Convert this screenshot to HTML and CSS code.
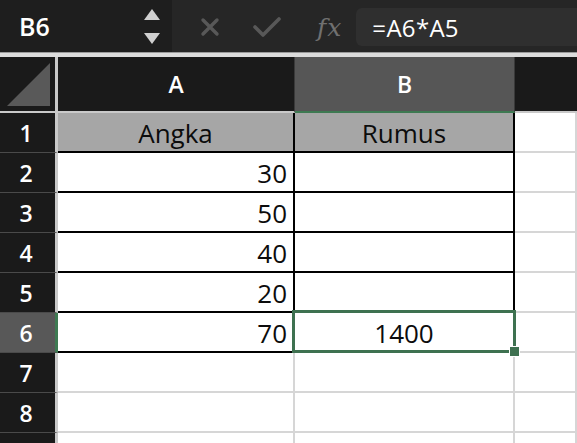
FILE: index.html
```html
<!DOCTYPE html>
<html lang="id">
<head>
<meta charset="utf-8">
<title>Excel</title>
<link rel="stylesheet" href="styles.css">
</head>
<body>
<div class="app">
  <div class="toolbar">
    <div class="namebox">
      <span class="name">B6</span>
      <span class="spin">
        <svg width="16" height="36" viewBox="0 0 16 36"><polygon points="8,0 16,11 0,11" fill="#d0d0d0"/><polygon points="0,24 16,24 8,35" fill="#d0d0d0"/></svg>
      </span>
    </div>
    <div class="bar">
      <svg class="ico-x" width="20" height="20" viewBox="0 0 20 20"><path d="M3 3 L17 17 M17 3 L3 17" stroke="#585858" stroke-width="3.4" stroke-linecap="round"/></svg>
      <svg class="ico-check" width="28" height="22" viewBox="0 0 28 22"><path d="M2 11 L10 19 L26 3" stroke="#585858" stroke-width="3.6" fill="none" stroke-linecap="round" stroke-linejoin="round"/></svg>
      <span class="fx">fx</span>
      <div class="formula">=A6*A5</div>
    </div>
  </div>
  <div class="sep"></div>
  <div class="sheet">
    <div class="corner"><svg width="44" height="44" viewBox="0 0 44 44"><polygon points="0,43 43,43 43,0" fill="#595959"/></svg></div>
    <div class="colh">A</div>
    <div class="colh sel-col">B</div>
    <div class="colh last"></div>

    <div class="rowh">1</div>
    <div class="cell bk hd c">Angka</div>
    <div class="cell bk hd c">Rumus</div>
    <div class="cell"></div>

    <div class="rowh">2</div>
    <div class="cell bk r">30</div>
    <div class="cell bk"></div>
    <div class="cell"></div>

    <div class="rowh">3</div>
    <div class="cell bk r">50</div>
    <div class="cell bk"></div>
    <div class="cell"></div>

    <div class="rowh">4</div>
    <div class="cell bk r">40</div>
    <div class="cell bk"></div>
    <div class="cell"></div>

    <div class="rowh">5</div>
    <div class="cell bk r">20</div>
    <div class="cell bk"></div>
    <div class="cell"></div>

    <div class="rowh sel-row">6</div>
    <div class="cell bk r">70</div>
    <div class="cell bk c active">1400<div class="selbox"><div class="handle"></div></div></div>
    <div class="cell"></div>

    <div class="rowh">7</div>
    <div class="cell"></div>
    <div class="cell"></div>
    <div class="cell"></div>

    <div class="rowh">8</div>
    <div class="cell"></div>
    <div class="cell"></div>
    <div class="cell"></div>

    <div class="rowh"></div>
    <div class="cell"></div>
    <div class="cell"></div>
    <div class="cell"></div>
  </div>
</div>
</body>
</html>
```

FILE: styles.css
```css
* { box-sizing: border-box; }
html, body { margin: 0; padding: 0; }
body {
  width: 577px;
  height: 443px;
  overflow: hidden;
  background: #ffffff;
  font-family: "Open Sans", "Noto Sans", sans-serif;
}
.app { width: 577px; }

.toolbar {
  display: flex;
  height: 52px;
  background: #262626;
}
.namebox {
  width: 172px;
  background: #1e1e1e;
  display: flex;
  align-items: center;
  padding-left: 19px;
  padding-right: 12px;
}
.name {
  color: #ffffff;
  font-size: 25px;
  font-weight: 600;
  flex: 1;
}
.spin { display: flex; padding-top: 2px; }
.bar {
  flex: 1;
  display: flex;
  align-items: center;
  padding-top: 8px;
  padding-bottom: 6px;
  height: 52px;
}
.ico-x { margin-left: 28px; }
.ico-check { margin-left: 33px; }
.fx {
  margin-left: 36px;
  font-family: "DejaVu Serif", "Liberation Serif", serif;
  font-style: italic;
  font-size: 25px;
  color: #707070;
  letter-spacing: 1px;
}
.formula {
  margin-left: 14px;
  flex: 1;
  align-self: stretch;
  background: #2f2f2f;
  border-radius: 6px 0 0 6px;
  color: #ffffff;
  font-size: 24px;
  font-weight: 500;
  letter-spacing: 0.3px;
  display: flex;
  align-items: center;
  padding-left: 16px;
}

.sep {
  height: 5px;
  background: #dcdcdc;
  border-top: 1px solid #9a9a9a;
}

.sheet {
  display: grid;
  grid-template-columns: 58px 237px 220px 62px;
  grid-template-rows: 56px repeat(9, 40px);
  background: #ffffff;
}
.corner {
  background: #1a1a1a;
  border-right: 3px solid #c9c9c9;
  border-bottom: 2px solid #c9c9c9;
  display: flex;
  align-items: flex-end;
  justify-content: flex-end;
  padding: 0 4px 4px 0;
}
.colh {
  background: #1a1a1a;
  color: #ffffff;
  font-size: 23px;
  font-weight: 600;
  display: flex;
  align-items: center;
  justify-content: center;
  border-right: 1px solid #3a3a3a;
  border-bottom: 2px solid #c9c9c9;
}
.colh.sel-col {
  background: #565656;
  border-bottom: 2px solid #3e7a52;
}
.colh.last { border-right: none; }

.rowh {
  background: #1a1a1a;
  color: #ffffff;
  font-size: 23px;
  font-weight: 600;
  display: flex;
  align-items: center;
  justify-content: center;
  padding-right: 3px;
  border-right: 3px solid #c9c9c9;
  border-bottom: 1px solid #4a4a4a;
}
.rowh.sel-row {
  background: #585858;
  border-right: 3px solid #3e7a52;
}

.cell {
  border-right: 2px solid #d6d6d6;
  border-bottom: 2px solid #d6d6d6;
  font-size: 26px;
  font-weight: 500;
  color: #0c0c0c;
  display: flex;
  align-items: center;
  padding: 2px 6px 0 6px;
}
.cell.bk {
  border-right-color: #000000;
  border-bottom-color: #000000;
}
.cell.hd { background: #a6a6a6; }
.cell.c { justify-content: center; }
.cell.r { justify-content: flex-end; }

.cell.active { position: relative; }
.selbox {
  position: absolute;
  left: -3px;
  top: -3px;
  right: -3px;
  bottom: -2px;
  border: 3px solid #3e7150;
}
.handle {
  position: absolute;
  right: -7px;
  bottom: -7px;
  width: 11px;
  height: 11px;
  background: #3e7150;
  border: 1px solid #ffffff;
}
```
